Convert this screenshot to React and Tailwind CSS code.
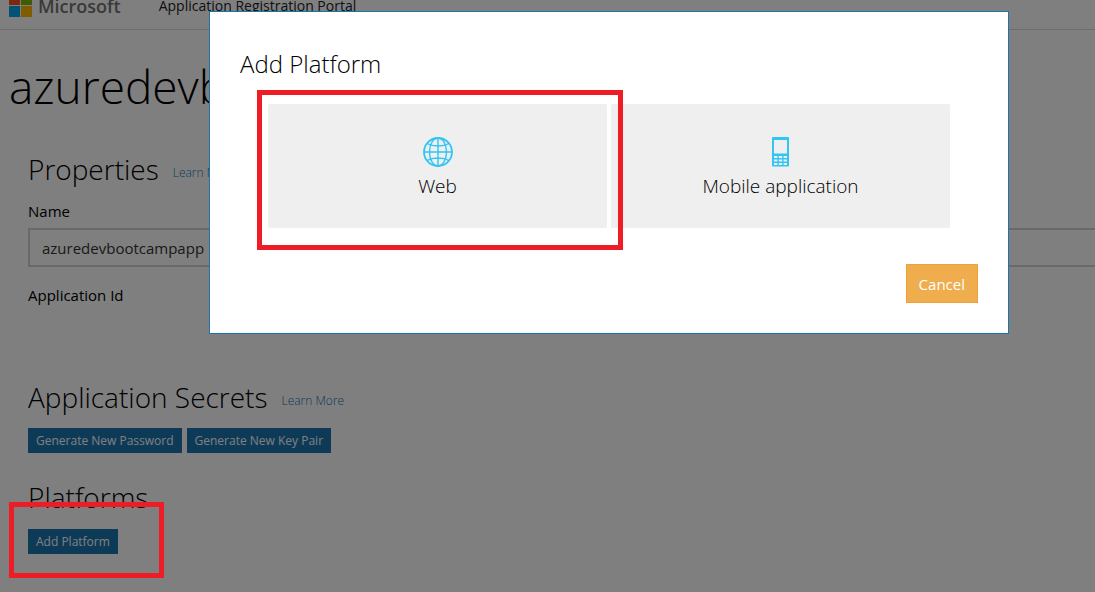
const pageButton =
  'h-[25px] bg-[#1a74ae] px-2 text-[12px] leading-[26px] text-white';

function MicrosoftLogo() {
  return (
    <svg viewBox="0 0 23 23" className="h-[23px] w-[23px]" aria-hidden="true">
      <rect width="11" height="11" fill="#f25022" />
      <rect x="12" width="11" height="11" fill="#7fba00" />
      <rect y="12" width="11" height="11" fill="#00a4ef" />
      <rect x="12" y="12" width="11" height="11" fill="#ffb900" />
    </svg>
  );
}

function GlobeIcon() {
  return (
    <svg viewBox="0 0 30 30" className="h-[30px] w-[30px]" fill="none" stroke="#31c5f4" strokeWidth="1.4" aria-hidden="true">
      <circle cx="15" cy="15" r="14" strokeWidth="1.8" />
      <ellipse cx="15" cy="15" rx="8.5" ry="14" />
      <path d="M15 1v28M1 15h28M4 6.5c6 3.4 16 3.4 22 0M4 23.5c6-3.4 16-3.4 22 0" />
    </svg>
  );
}

function PhoneIcon() {
  return (
    <svg viewBox="0 0 17 30" className="h-[30px] w-[17px]" aria-hidden="true">
      <rect width="17" height="29.5" rx="1" fill="#31c5f4" />
      <rect x="2" y="3" width="13" height="13.5" fill="#efefef" />
      <g fill="#efefef">
        <rect x="2" y="19" width="3.4" height="2" />
        <rect x="6.8" y="19" width="3.4" height="2" />
        <rect x="11.6" y="19" width="3.4" height="2" />
        <rect x="2" y="22.5" width="3.4" height="2" />
        <rect x="6.8" y="22.5" width="3.4" height="2" />
        <rect x="11.6" y="22.5" width="3.4" height="2" />
        <rect x="2" y="26" width="3.4" height="2" />
        <rect x="6.8" y="26" width="3.4" height="2" />
        <rect x="11.6" y="26" width="3.4" height="2" />
      </g>
    </svg>
  );
}

function SectionHeading({ children, learnMore }) {
  return (
    <div className="flex items-end gap-[14px]">
      <h2 className="text-[28px] leading-10 font-light">{children}</h2>
      {learnMore && (
        <a href="#learn-more" className="pb-1 text-[12px] leading-6 font-light text-[#1a74ae]">
          Learn More
        </a>
      )}
    </div>
  );
}

function PlatformTile({ icon, label }) {
  return (
    <button type="button" className="flex h-[124px] flex-1 flex-col items-center rounded-[2px] bg-[#efefef] pt-[33px]">
      {icon}
      <span className="mt-[3px] text-[19px] leading-8 font-light">{label}</span>
    </button>
  );
}

function AddPlatformDialog() {
  return (
    <div className="fixed inset-0 flex items-start justify-center bg-black/50 pt-[11px] pl-[123px]">
      <div role="dialog" aria-modal="true" aria-labelledby="dialog-title" className="w-full max-w-[800px] border border-[#1a74ae] bg-white px-[30px] pt-8 pb-[30px]">
        <h2 id="dialog-title" className="text-[24px] leading-10 font-light">Add Platform</h2>
        <div className="mt-5 flex gap-1 px-7">
          <PlatformTile icon={<GlobeIcon />} label="Web" />
          <PlatformTile icon={<PhoneIcon />} label="Mobile application" />
        </div>
        <div className="mt-9 flex justify-end">
          <button type="button" className="h-[39px] border border-[#eea236] bg-[#f0ad4e] px-3 pt-[2px] text-[15px] text-white">
            Cancel
          </button>
        </div>
      </div>
    </div>
  );
}

export default function App() {
  return (
    <div className="relative min-h-screen overflow-hidden bg-white font-['Segoe_UI','Open_Sans',sans-serif] text-black">
      <header className="flex h-[30px] items-center border-b border-[#d8d8d8] pb-[18px] pl-[9px]">
        <MicrosoftLogo />
        <span className="ml-[6px] text-[18px] leading-6 font-semibold text-[#737373]">Microsoft</span>
        <span className="ml-[38px] text-[14px] leading-6 text-[#222]">Application Registration Portal</span>
      </header>

      <main>
        <h1 className="pt-6 pl-[9px] text-[46px] leading-16 font-light">azuredevbootcampapp</h1>
        <div className="pt-[31px] pl-7">
          <section>
            <SectionHeading learnMore>Properties</SectionHeading>
            <label htmlFor="app-name" className="mt-[10px] block text-[15px] leading-6">Name</label>
            <input id="app-name" defaultValue="azuredevbootcampapp" className="mt-[5px] h-[39px] w-full border-2 border-r-0 border-[#d2d2d2] bg-white px-3 text-[15px] text-[#333]" />
            <p className="mt-4 text-[15px] leading-6">Application Id</p>
          </section>

          <section className="mt-[70px]">
            <SectionHeading learnMore>Application Secrets</SectionHeading>
            <div className="mt-[11px] flex gap-[5px]">
              <button type="button" className={pageButton}>Generate New Password</button>
              <button type="button" className={pageButton}>Generate New Key Pair</button>
            </div>
          </section>

          <section className="mt-[24px]">
            <SectionHeading>Platforms</SectionHeading>
            <button type="button" className={`mt-3 ${pageButton}`}>Add Platform</button>
          </section>
        </div>
      </main>

      <AddPlatformDialog />

      <div className="pointer-events-none absolute top-[90px] left-[257px] h-[160px] w-[366px] border-5 border-[#ee1c24]" />
      <div className="pointer-events-none absolute top-[502px] left-[9px] h-[76px] w-[155px] border-5 border-[#ee1c24]" />
    </div>
  );
}
